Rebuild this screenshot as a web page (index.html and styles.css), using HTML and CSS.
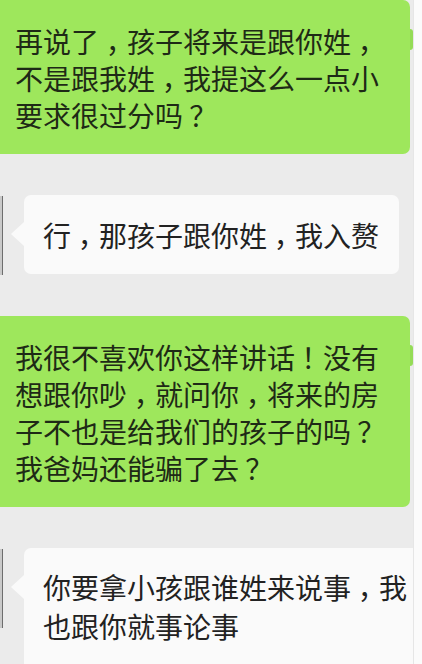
FILE: index.html
```html
<!DOCTYPE html>
<html lang="zh-CN">
<head>
<meta charset="utf-8">
<title>聊天记录</title>
<link rel="stylesheet" href="styles.css">
</head>
<body>
<div class="screen">
  <div class="chat">
    <div class="row mine">
      <div class="bubble green">再说了<span class="pt">，</span>孩子将来是跟你姓<span class="pt">，</span>不是跟我姓<span class="pt">，</span>我提这么一点小要求很过分吗<span class="pq">？</span></div>
    </div>
    <div class="row theirs">
      <div class="avatar"></div>
      <div class="bubble white">行<span class="pt">，</span>那孩子跟你姓<span class="pt">，</span>我入赘</div>
    </div>
    <div class="row mine">
      <div class="bubble green">我很不喜欢你这样讲话<span class="pq">！</span>没有想跟你吵<span class="pt">，</span>就问你<span class="pt">，</span>将来的房子不也是给我们的孩子的吗<span class="pq">？</span>我爸妈还能骗了去<span class="pq">？</span></div>
    </div>
    <div class="row theirs">
      <div class="avatar"></div>
      <div class="bubble white wide">你要拿小孩跟谁姓来说事<span class="pt">，</span>我也跟你就事论事</div>
    </div>
  </div>
  <div class="edge"></div>
</div>
</body>
</html>
```
FILE: styles.css
```css
html, body {
  margin: 0;
  padding: 0;
}

body {
  background: #fbfbfb;
  font-family: "Noto Sans CJK SC", "Microsoft YaHei", sans-serif;
}

.screen {
  display: flex;
  width: 422px;
  height: 664px;
  overflow: hidden;
}

.chat {
  width: 413px;
  flex: none;
  background: #ebebeb;
  display: flex;
  flex-direction: column;
  gap: 41px;
  overflow: hidden;
}

.edge {
  flex: 1;
  background: #fbfbfb;
  border-left: 1px solid #e6e6e6;
}

.row {
  display: flex;
  align-items: flex-start;
}

.bubble {
  position: relative;
  font-size: 28px;
  line-height: 37px;
  color: #1f1f1f;
  word-break: break-all;
}

/* full-width punctuation drawn nearer the middle of its cell:
   the cell stays 1em wide, the glyph starts further right */
.pt {
  padding-left: 0.24em;
  letter-spacing: -0.24em;
}

.pq {
  padding-left: 0.22em;
  letter-spacing: -0.22em;
}

/* outgoing messages: green, running off the left edge */
.row.mine {
  padding-right: 3px;
}

.bubble.green {
  flex: 1;
  margin-left: -8px;
  background: #9ee75c;
  border-radius: 7px;
  padding: 23px 28px 20px 23px;
  color: #1e2a16;
}

.bubble.green::after {
  content: "";
  position: absolute;
  right: -3px;
  top: 29px;
  width: 3px;
  height: 21px;
  background: #95dc57;
  border-radius: 0 3px 3px 0;
}

/* incoming messages: white with a left-pointing tail */
.avatar {
  flex: none;
  width: 2px;
  height: 79px;
  background: #c9c9c9;
  border-right: 1px solid #6d6d6d;
  margin-top: 1px;
}

.bubble.white {
  margin-left: 21px;
  background: #fafafa;
  border-radius: 7px;
  padding: 22px 20px 20px 19px;
  color: #222;
}

.bubble.white.wide {
  flex: none;
  width: 368px;
  line-height: 39px;
  padding-top: 20px;
  padding-bottom: 40px;
}

.bubble.white::before {
  content: "";
  position: absolute;
  left: -13px;
  top: 27px;
  border-style: solid;
  border-width: 12px 13px 12px 0;
  border-color: transparent #fafafa transparent transparent;
}
```
